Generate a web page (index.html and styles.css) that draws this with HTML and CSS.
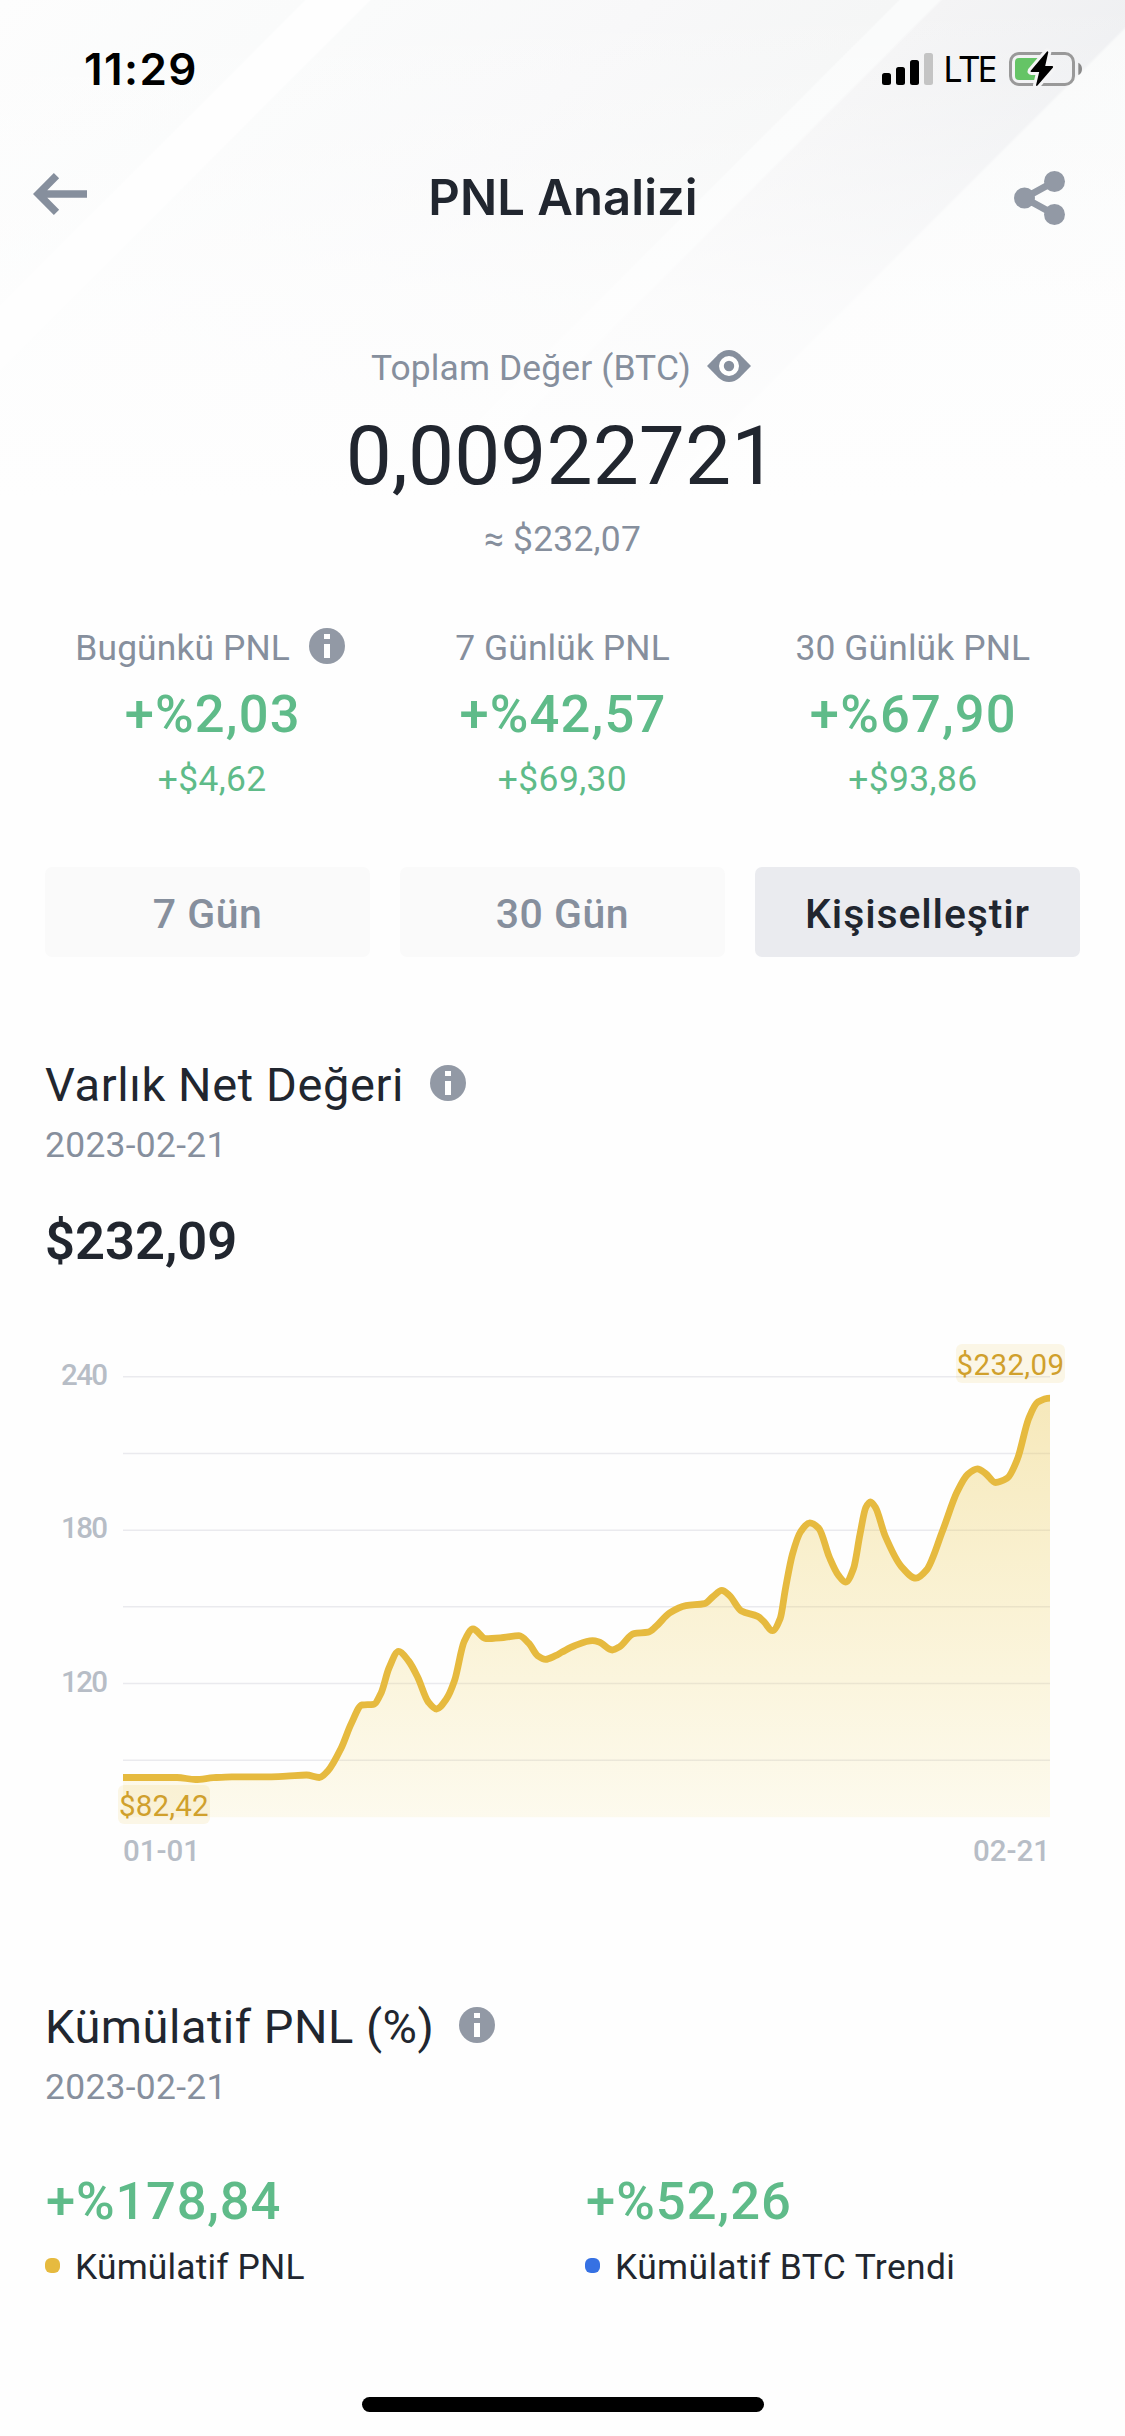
FILE: index.html
```
<!DOCTYPE html>
<html lang="tr">
<head>
<meta charset="utf-8">
<title>PNL Analizi</title>
<link rel="stylesheet" href="styles.css">
</head>
<body>
<svg class="defs" width="0" height="0" aria-hidden="true">
  <symbol id="info" viewBox="0 0 36 36">
    <circle cx="18" cy="18" r="18" fill="#9299a5"/>
    <path d="M15 6h6v5h-6zM15 16h6v14h-6z" fill="#fff"/>
  </symbol>
</svg>
<main class="screen">
  <header class="top">
    <div class="status">
      <span class="time">11:29</span>
      <div class="status-icons">
        <svg class="signal" width="51" height="32" viewBox="0 0 51 32">
          <rect x="0" y="20" width="9" height="12" rx="2.5"/>
          <rect x="14" y="14" width="9" height="18" rx="2.5"/>
          <rect x="28" y="7" width="9" height="25" rx="2.5"/>
          <rect x="42" y="0" width="9" height="32" rx="2.5" fill="#c4c4c4"/>
        </svg>
        <span class="lte">LTE</span>
        <svg class="battery" width="73" height="34" viewBox="0 0 73 34">
          <rect x="1.5" y="1.5" width="63" height="31" rx="8.5" fill="none" stroke="#999" stroke-width="3"/>
          <path d="M69.300 10.700c2.400 1 3.700 3.400 3.700 6.200s-1.300 5.200-3.700 6.200z" fill="#8a8a8a"/>
          <path d="M10 6h22l-4 22H10a4 4 0 0 1-4-4V10a4 4 0 0 1 4-4z" fill="#65c466"/>
          <path d="M38-.5 21.700 18.700q-.6 1.300.8 1.300h7.700L27 33.300q.5 1.200 1.500.3L44 15.500q.6-1.500-.8-1.500h-7L39.300.2q-.4-1.500-1.300-.7z" fill="#000" stroke="#f5f5f6" stroke-width="6" paint-order="stroke" stroke-linejoin="round"/>
        </svg>
      </div>
    </div>
    <nav class="titlebar">
      <svg class="back" width="54" height="42" viewBox="0 0 54 42">
        <path d="M23.500 2.700 5.200 21l18.300 18.300M6 21h48" fill="none" stroke="#868f9d" stroke-width="7.500"/>
      </svg>
      <h1 class="title">PNL Analizi</h1>
      <svg class="share" width="51" height="54" viewBox="0 0 51 54">
        <path d="M40.500 10.500 10.500 27l30 16.500" fill="none" stroke="#9299a5" stroke-width="7"/>
        <g fill="#9299a5"><circle cx="10.500" cy="27" r="10.500"/><circle cx="40.500" cy="10.500" r="10.500"/><circle cx="40.500" cy="43.500" r="10.500"/></g>
      </svg>
    </nav>
    <section class="total">
      <div class="total-label">
        <span>Toplam Değer (BTC)</span>
        <svg class="eye" width="44" height="32" viewBox="0 0 44 32">
          <path d="M0 16 11.500 4.300C17.500-1.400 26.500-1.400 32.500 4.300L44 16 32.500 27.700c-6 5.700-15 5.700-21 0z" fill="#868f9d"/>
          <circle cx="22" cy="16" r="7.600" fill="none" stroke="#fff" stroke-width="4.800"/>
        </svg>
      </div>
      <div class="total-value">0,00922721</div>
      <div class="total-fiat">≈ $232,07</div>
    </section>
  </header>

  <section class="stats">
    <div class="stat">
      <div class="stat-label"><span>Bugünkü PNL</span><svg class="info" width="36" height="36"><use href="#info"/></svg></div>
      <div class="stat-value">+%2,03</div>
      <div class="stat-fiat">+$4,62</div>
    </div>
    <div class="stat">
      <div class="stat-label">7 Günlük PNL</div>
      <div class="stat-value">+%42,57</div>
      <div class="stat-fiat">+$69,30</div>
    </div>
    <div class="stat">
      <div class="stat-label">30 Günlük PNL</div>
      <div class="stat-value">+%67,90</div>
      <div class="stat-fiat">+$93,86</div>
    </div>
  </section>

  <div class="tabs">
    <button class="tab">7 Gün</button>
    <button class="tab">30 Gün</button>
    <button class="tab active">Kişiselleştir</button>
  </div>

  <section class="panel net">
    <h2 class="heading"><span>Varlık Net Değeri</span><svg class="info" width="36" height="36"><use href="#info"/></svg></h2>
    <div class="date">2023-02-21</div>
    <div class="net-value">$232,09</div>
  </section>

  <svg class="chart" width="1125" height="560" viewBox="0 0 1125 560">
    <defs>
      <linearGradient id="fill" gradientUnits="userSpaceOnUse" x1="0" y1="78" x2="0" y2="497.500">
        <stop offset="0" stop-color="#e8c243" stop-opacity=".36"/>
        <stop offset="1" stop-color="#f0d048" stop-opacity=".09"/>
      </linearGradient>
      <clipPath id="plot"><rect x="123" y="0" width="927" height="497.500"/></clipPath>
    </defs>
    <path class="grid" d="M123 56.800h927M123 133.500h927M123 210.200h927M123 286.800h927M123 363.500h927M123 440.200h927"/>
    <g clip-path="url(#plot)">
      <path id="area" fill="url(#fill)"/>
      <path id="line" class="line"/>
    </g>
    <g class="axis">
      <text class="tick" x="61" y="65.300">240</text>
      <text class="tick" x="61" y="218">180</text>
      <text class="tick" x="61" y="372.300">120</text>
      <text x="123" y="541">01-01</text>
      <text x="973" y="541">02-21</text>
    </g>
    <g class="badge">
      <rect x="956" y="24" width="109" height="39" rx="6"/>
      <text x="956.500" y="55" letter-spacing=".38">$232,09</text>
      <rect x="118" y="465" width="92" height="39" rx="6"/>
      <text x="119" y="496" letter-spacing=".18">$82,42</text>
    </g>
  </svg>

  <section class="panel cumulative">
    <h2 class="heading"><span>Kümülatif PNL (%)</span><svg class="info" width="36" height="36"><use href="#info"/></svg></h2>
    <div class="date">2023-02-21</div>
    <div class="legend">
      <div class="series">
        <div class="series-value first">+%178,84</div>
        <div class="series-name"><i class="dot gold"></i>Kümülatif PNL</div>
      </div>
      <div class="series">
        <div class="series-value">+%52,26</div>
        <div class="series-name wide"><i class="dot blue"></i>Kümülatif BTC Trendi</div>
      </div>
    </div>
  </section>
  <div class="home"></div>
</main>
<script src="chart.js"></script>
</body>
</html>
```
FILE: styles.css
```
* { box-sizing: border-box; margin: 0; padding: 0; }
body { width: 1125px; background: #fefefe; color: #21262f; font-family: Roboto, sans-serif; }
svg { display: block; flex: none; }
.defs { position: absolute; }
.screen { height: 2436px; display: flex; flex-direction: column; overflow: hidden; }

.top {
  height: 626px;
  flex: none;
  background:
    linear-gradient(180deg, rgba(254,254,254,0) 0, rgba(254,254,254,.3) 140px, rgba(254,254,254,.75) 300px, #fefefe 500px),
    linear-gradient(135deg, #fdfdfd 0, #fafbfb 215px, #fefefe 217px, #fefefe 261px, #fafbfb 263px, #f8f8f9 460px, #f5f6f6 635px, #fafbfb 637px, #fafbfb 664px, #f4f4f5 667px, #eff0f2 814px, #f9fafa 817px, #fcfcfc 1200px);
}
.status { height: 138px; padding: 0 43px 0 84px; display: flex; justify-content: space-between; align-items: center; color: #000; }
.time { font: 600 44px/138px Inter, sans-serif; letter-spacing: 1.4px; }
.status-icons { display: flex; align-items: center; }
.lte { font: 400 36px/138px "Noto Sans", sans-serif; letter-spacing: -1.9px; width: 66px; margin-left: 10px; }
.battery { overflow: visible; }

.titlebar { height: 120px; padding: 0 60px 0 33px; display: grid; grid-template-columns: 1fr auto 1fr; align-items: center; }
.back { margin-bottom: 8px; }
.share { justify-self: end; }
.title { font: 600 49px/120px Inter, sans-serif; letter-spacing: .05px; margin-left: 28px; }

.total { margin-top: 86px; display: flex; flex-direction: column; align-items: center; }
.total-label { height: 48px; display: flex; align-items: center; gap: 16px; padding-right: 3px; font-size: 35.4px; line-height: 48px; letter-spacing: .13px; color: #868f9d; }
.eye { margin-bottom: 4px; }
.total-value { margin-top: 15.5px; padding-right: 2px; font-size: 82px; line-height: 96px; letter-spacing: .08px; }
.total-fiat { margin-top: 13.5px; font-size: 35.4px; line-height: 44px; letter-spacing: .23px; color: #868f9d; }

.stats { display: grid; grid-template-columns: repeat(3, 1fr); padding: 0 37px; text-align: center; }
.stat-label { height: 44px; display: flex; justify-content: center; gap: 19px; font-size: 35.4px; line-height: 44px; letter-spacing: .12px; color: #868f9d; }
.stat-label .info { margin-top: 2px; margin-right: 4px; }
.stat-value { margin-top: 14px; padding-left: 1px; font-weight: 500; font-size: 52.5px; line-height: 60px; letter-spacing: 1.15px; color: #5fbb89; }
.stat-fiat { margin-top: 13px; font-size: 35.4px; line-height: 44px; letter-spacing: .4px; color: #5fbb89; }

.tabs { margin-top: 66px; padding: 0 45px; display: grid; grid-template-columns: repeat(3, 1fr); gap: 30px; }
.tab { height: 90px; padding-top: 4px; border: 0; border-radius: 7px; background: #fafafa; color: #868f9d; font: 500 41px/86px Roboto, sans-serif; letter-spacing: .5px; }
.tab.active { background: #eaebef; color: #21262f; letter-spacing: .87px; }

.panel { padding: 0 45px; }
.net { margin-top: 98px; }
.heading { height: 60px; display: flex; align-items: center; gap: 26px; font-weight: 400; font-size: 47px; line-height: 60px; letter-spacing: .6px; }
.heading .info { margin-bottom: 4px; }
.date { margin-top: 8px; font-size: 35.4px; line-height: 44px; letter-spacing: .3px; color: #868f9d; }
.net-value { margin-top: 44px; font-weight: 600; font-size: 52.5px; line-height: 60px; }

.chart { margin-top: 49px; font-family: Roboto, sans-serif; font-size: 29.5px; }
.grid { stroke: #eaeaee; stroke-width: 1.6; fill: none; }
.line { fill: none; stroke: #e6ba3f; stroke-width: 6.8; stroke-linejoin: round; }
.axis { font-weight: 500; fill: #b7bdc6; }
.tick { letter-spacing: -1.6px; }
.badge rect { fill: #e8c243; fill-opacity: .13; }
.badge text { fill: #d0a02c; }

.cumulative { margin-top: 117px; }
.cumulative .heading { gap: 25px; letter-spacing: .5px; }
.legend { margin-top: 62px; display: grid; grid-template-columns: 540px 1fr; }
.series-value { padding-left: 1px; font-weight: 500; font-size: 52.5px; line-height: 60px; letter-spacing: 1px; color: #5fbb89; }
.series-value.first { letter-spacing: .8px; }
.series-name { margin-top: 14px; height: 44px; display: flex; font-size: 35.4px; line-height: 44px; letter-spacing: .16px; }
.series-name.wide { letter-spacing: .38px; }
.dot { width: 15px; height: 15px; border-radius: 6px; margin: 13px 15px 0 0; }
.gold { background: #e6ba3f; }
.blue { background: #3671e3; }
.home { width: 402px; height: 15px; margin: 108px auto 0; border-radius: 8px; background: #000; flex: none; }
```
FILE: chart.js
```
// Net asset value curve, in plot coordinates.
const points = [
  [123,457.5],[150,457.5],[177,457.5],[195.5,459.5],[213.5,457.7],[232,456.8],[268.5,456.8],[286.5,456.2],[306.5,455],
  [319.3,457.5],[328,450.7],[341,428.5],[351.3,403.5],[362,385],[373.5,384.3],[381,373.2],[389,348],[398.6,331.4],
  [408.6,341],[417.6,357],[428.3,382],[436.6,389],[446.2,379.3],[454.5,360.7],[464.2,321.4],[473,309],[485.7,318.6],
  [503.6,317.5],[519,315.7],[528.7,323.2],[537.6,335.7],[545.5,339.3],[555.5,335.7],[562,332.1],[574.6,325.7],
  [592.5,320.7],[599,322],[612.3,330],[619.5,326.8],[633.8,313.6],[648.2,312.1],[656,306.4],[669.7,292.9],
  [685.9,285.7],[704.5,283.6],[712.8,276.8],[721.8,270.4],[729,275],[741.5,291],[757.7,296.4],[764,301.8],
  [772.4,310.7],[780.3,298.2],[785.3,269.6],[792.5,234],[800.8,211.4],[809.8,202.9],[818.7,208.2],[829.5,237.5],
  [838.5,255.4],[845.7,262.1],[853.6,248.2],[860,214.3],[865.8,187.5],[870.4,181.8],[875.5,187.5],[885.2,216],
  [901.3,246.4],[916,258.2],[926.5,250],[942.6,210.7],[957,172.1],[967.7,154.3],[977.4,148.9],[985.7,153.6],
  [995.4,162.5],[1007.2,158.2],[1017.3,139.3],[1028.8,98.2],[1037.8,82.1],[1050,78.2]
];

// Monotone cubic interpolation keeps the curve from overshooting its extrema.
const n = points.length;
const slope = [];
for (let i = 0; i < n - 1; i++) {
  slope.push((points[i + 1][1] - points[i][1]) / (points[i + 1][0] - points[i][0]));
}
const tangent = points.map((p, i) => {
  if (i === 0) return slope[0];
  if (i === n - 1) return 0;
  const a = slope[i - 1], b = slope[i];
  return a * b <= 0 ? 0 : 2 * a * b / (a + b);
});
let d = `M${points[0]}`;
for (let i = 0; i < n - 1; i++) {
  const [x0, y0] = points[i], [x1, y1] = points[i + 1], h = (x1 - x0) / 3;
  d += `C${x0 + h},${y0 + h * tangent[i]} ${x1 - h},${y1 - h * tangent[i + 1]} ${x1},${y1}`;
}
document.getElementById('line').setAttribute('d', d);
document.getElementById('area').setAttribute('d', d + 'V497.5H123Z');
```
